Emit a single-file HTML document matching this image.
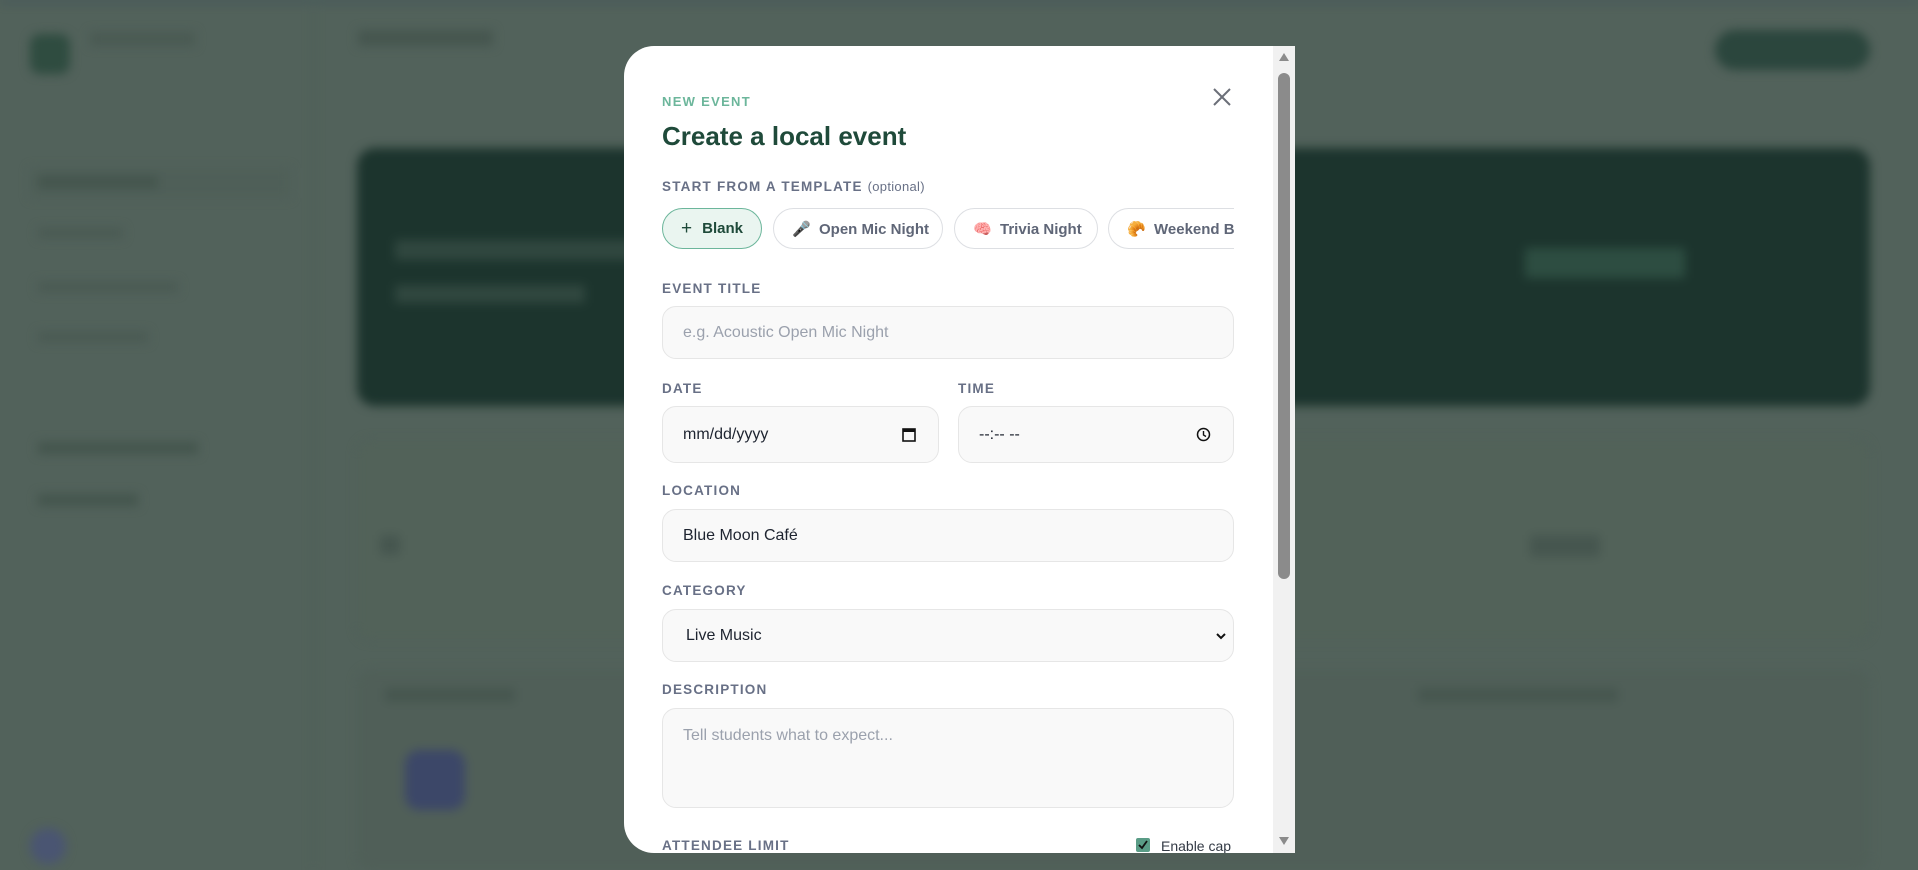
<!DOCTYPE html>
<html><head><meta charset="utf-8">
<style>
*{box-sizing:border-box;margin:0;padding:0}
body{width:1918px;height:870px;overflow:hidden;background:#52625b;font-family:"Liberation Sans",sans-serif;position:relative}
.bg{position:absolute;inset:0;filter:blur(5px)}
.b{position:absolute}
.modal{position:absolute;left:624px;top:46px;width:671px;height:807px;background:#fff;border-radius:30px 0 0 30px;overflow:hidden}
.sb{position:absolute;right:0;top:0;width:22px;height:100%;background:#f1f1f1}
.thumb{position:absolute;left:5px;top:27px;width:12px;height:506px;background:#8b8b8b;border-radius:6px}
.lbl{position:absolute;left:38px;font-size:13.5px;font-weight:bold;letter-spacing:1.2px;color:#687086}
.inp{position:absolute;left:38px;width:572px;background:#f9f9f9;border:1px solid #e6e6e6;border-radius:14px;font-size:16px;color:#1e2430;padding-left:20px;display:flex;align-items:center}
.ph{color:#9ba1ad}
.chip{position:absolute;top:162px;height:41px;border:1px solid #dddfe3;border-radius:21px;font-size:15px;font-weight:bold;color:#5f6677;display:flex;align-items:center;padding-left:18px;white-space:nowrap;overflow:hidden;background:#fff}
</style></head><body>
<div class="bg">
 <div class="b" style="left:0;top:0;width:1918px;height:2px;background:#34485a"></div>
 <div class="b" style="left:313px;top:0;width:1px;height:870px;background:#4a5a53"></div>
 <div class="b" style="left:30px;top:34px;width:40px;height:40px;background:#2f4c40;border-radius:10px"></div>
 <div class="b" style="left:90px;top:32px;width:105px;height:14px;background:#4a5a53"></div>
 <div class="b" style="left:30px;top:168px;width:260px;height:30px;background:#4f5f58"></div>
 <div class="b" style="left:38px;top:176px;width:120px;height:12px;background:#44554d"></div>
 <div class="b" style="left:38px;top:228px;width:85px;height:10px;background:#4a5a53"></div>
 <div class="b" style="left:38px;top:282px;width:140px;height:10px;background:#4a5a53"></div>
 <div class="b" style="left:38px;top:332px;width:110px;height:10px;background:#4a5a53"></div>
 <div class="b" style="left:38px;top:442px;width:160px;height:12px;background:#44554d"></div>
 <div class="b" style="left:38px;top:494px;width:100px;height:12px;background:#44554d"></div>
 <div class="b" style="left:30px;top:828px;width:36px;height:36px;background:#4a5572;border-radius:50%"></div>
 <div class="b" style="left:358px;top:30px;width:135px;height:16px;background:#46564f"></div>
 <div class="b" style="left:357px;top:148px;width:1513px;height:258px;background:#1c342d;border-radius:18px"></div>
 <div class="b" style="left:395px;top:240px;width:250px;height:20px;background:#30473f"></div>
 <div class="b" style="left:395px;top:285px;width:190px;height:18px;background:#30473f"></div>
 <div class="b" style="left:1525px;top:248px;width:160px;height:30px;background:#2d4d41"></div>
 <div class="b" style="left:1715px;top:30px;width:155px;height:40px;background:#2b463d;border-radius:20px"></div>
 <div class="b" style="left:357px;top:440px;width:1513px;height:200px;background:#526259;border:1px solid #4d5d56;border-radius:14px"></div>
 <div class="b" style="left:380px;top:535px;width:20px;height:20px;background:#46564f"></div>
 <div class="b" style="left:1530px;top:535px;width:70px;height:22px;background:#46564f"></div>
 <div class="b" style="left:357px;top:670px;width:1513px;height:200px;background:#505f58;border-radius:14px"></div>
 <div class="b" style="left:405px;top:750px;width:60px;height:60px;background:#3c4768;border-radius:14px"></div>
 <div class="b" style="left:385px;top:688px;width:130px;height:14px;background:#46564f"></div>
 <div class="b" style="left:1418px;top:688px;width:200px;height:14px;background:#46564f"></div>
</div>
<div class="modal">
 <div style="position:absolute;left:38px;top:48px;font-size:13px;font-weight:bold;letter-spacing:1.3px;color:#6cb69b">NEW EVENT</div>
 <svg style="position:absolute;left:588px;top:41px" width="20" height="20" viewBox="0 0 20 20"><path d="M2 2L18 18M18 2L2 18" stroke="#6b6f78" stroke-width="2"/></svg>
 <div style="position:absolute;left:38px;top:75px;font-size:26px;font-weight:bold;color:#1f4a3a">Create a local event</div>
 <div class="lbl" style="top:133px">START FROM A TEMPLATE <span style="font-weight:normal;letter-spacing:0.3px;font-size:13px">(optional)</span></div>
 <div class="chip" style="left:38px;width:100px;background:#eaf5f0;border-color:#6cb69b;color:#1f4a3a"><span style="font-weight:normal;font-size:19px;margin-right:10px">+</span>Blank</div>
 <div class="chip" style="left:149px;width:170px">🎤&nbsp; Open Mic Night</div>
 <div class="chip" style="left:330px;width:144px">🧠&nbsp; Trivia Night</div>
 <div class="chip" style="left:484px;width:126px;border-right:none;border-radius:21px 0 0 21px">🥐&nbsp; Weekend Brunch</div>
 <div class="lbl" style="top:235px">EVENT TITLE</div>
 <div class="inp" style="top:260px;height:53px"><span class="ph">e.g. Acoustic Open Mic Night</span></div>
 <div class="lbl" style="top:335px">DATE</div>
 <div class="lbl" style="left:334px;top:335px">TIME</div>
 <div class="inp" style="top:360px;height:57px;width:277px">mm/dd/yyyy
  <svg style="position:absolute;right:22px" width="14" height="15" viewBox="0 0 14 15"><rect x="1" y="2" width="12" height="12" fill="none" stroke="#111" stroke-width="1.6"/><rect x="1" y="2" width="12" height="3" fill="#111"/></svg></div>
 <div class="inp" style="left:334px;top:360px;height:57px;width:276px">--:-- --
  <svg style="position:absolute;right:22px" width="15" height="15" viewBox="0 0 15 15"><circle cx="7.5" cy="7.5" r="6" fill="none" stroke="#111" stroke-width="1.5"/><path d="M7.5 4v4l2.5 1.5" fill="none" stroke="#111" stroke-width="1.4"/></svg></div>
 <div class="lbl" style="top:437px">LOCATION</div>
 <div class="inp" style="top:463px;height:53px">Blue Moon Café</div>
 <div class="lbl" style="top:537px">CATEGORY</div>
 <div class="inp" style="top:563px;height:53px;padding-left:23px">Live Music
  <svg style="position:absolute;right:6px" width="12" height="10" viewBox="0 0 12 10"><path d="M2 3l4 4 4-4" fill="none" stroke="#111" stroke-width="2"/></svg></div>
 <div class="lbl" style="top:636px">DESCRIPTION</div>
 <div class="inp" style="top:662px;height:100px;align-items:flex-start;padding-top:18px"><span class="ph">Tell students what to expect...</span></div>
 <div class="lbl" style="top:792px">ATTENDEE LIMIT</div>
 <div style="position:absolute;left:512px;top:792px;width:14px;height:14px;background:#5a9c86;border-radius:2px"><svg width="14" height="14" viewBox="0 0 14 14"><path d="M3 7l3 3 5-7" fill="none" stroke="#111" stroke-width="1.8"/></svg></div>
 <div style="position:absolute;left:537px;top:792px;font-size:14px;color:#333a45">Enable cap</div>
 <div class="sb"><div class="thumb"></div>
  <svg style="position:absolute;left:5px;top:6px" width="12" height="10"><path d="M6 1L11 9H1Z" fill="#8b8b8b"/></svg>
  <svg style="position:absolute;left:5px;top:790px" width="12" height="10"><path d="M6 9L11 1H1Z" fill="#8b8b8b"/></svg>
 </div>
</div>
</body></html>
